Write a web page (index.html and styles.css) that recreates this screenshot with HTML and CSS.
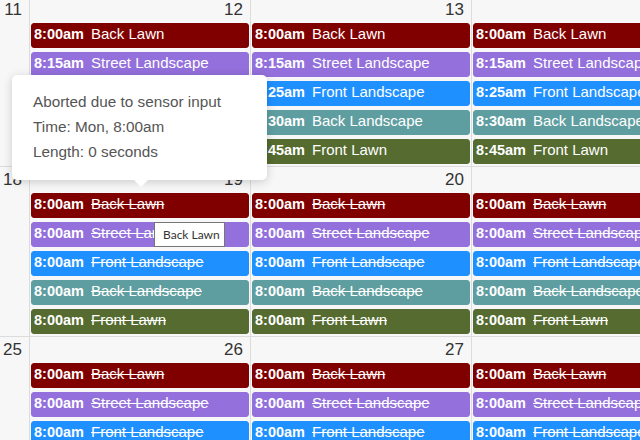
FILE: index.html
```html
<!DOCTYPE html>
<html>
<head>
<meta charset="utf-8">
<link rel="stylesheet" href="styles.css">
</head>
<body>
<div class="cal">
  <div class="week">
    <div class="day"><div class="num">11</div></div>
    <div class="day"><div class="num">12</div>
      <div class="ev c1"><b>8:00am</b><span>Back Lawn</span></div>
      <div class="ev c2"><b>8:15am</b><span>Street Landscape</span></div>
      <div class="ev c3"><b>8:25am</b><span>Front Landscape</span></div>
      <div class="ev c4"><b>8:30am</b><span>Back Landscape</span></div>
      <div class="ev c5"><b>8:45am</b><span>Front Lawn</span></div>
    </div>
    <div class="day"><div class="num">13</div>
      <div class="ev c1"><b>8:00am</b><span>Back Lawn</span></div>
      <div class="ev c2"><b>8:15am</b><span>Street Landscape</span></div>
      <div class="ev c3"><b>8:25am</b><span>Front Landscape</span></div>
      <div class="ev c4"><b>8:30am</b><span>Back Landscape</span></div>
      <div class="ev c5"><b>8:45am</b><span>Front Lawn</span></div>
    </div>
    <div class="day"><div class="num">14</div>
      <div class="ev c1"><b>8:00am</b><span>Back Lawn</span></div>
      <div class="ev c2"><b>8:15am</b><span>Street Landscape</span></div>
      <div class="ev c3"><b>8:25am</b><span>Front Landscape</span></div>
      <div class="ev c4"><b>8:30am</b><span>Back Landscape</span></div>
      <div class="ev c5"><b>8:45am</b><span>Front Lawn</span></div>
    </div>
  </div>
  <div class="week">
    <div class="day"><div class="num">18</div></div>
    <div class="day"><div class="num">19</div>
      <div class="ev c1 done"><b>8:00am</b><span>Back Lawn</span></div>
      <div class="ev c2 done"><b>8:00am</b><span>Street Landscape</span></div>
      <div class="ev c3 done"><b>8:00am</b><span>Front Landscape</span></div>
      <div class="ev c4 done"><b>8:00am</b><span>Back Landscape</span></div>
      <div class="ev c5 done"><b>8:00am</b><span>Front Lawn</span></div>
    </div>
    <div class="day"><div class="num">20</div>
      <div class="ev c1 done"><b>8:00am</b><span>Back Lawn</span></div>
      <div class="ev c2 done"><b>8:00am</b><span>Street Landscape</span></div>
      <div class="ev c3 done"><b>8:00am</b><span>Front Landscape</span></div>
      <div class="ev c4 done"><b>8:00am</b><span>Back Landscape</span></div>
      <div class="ev c5 done"><b>8:00am</b><span>Front Lawn</span></div>
    </div>
    <div class="day"><div class="num">21</div>
      <div class="ev c1 done"><b>8:00am</b><span>Back Lawn</span></div>
      <div class="ev c2 done"><b>8:00am</b><span>Street Landscape</span></div>
      <div class="ev c3 done"><b>8:00am</b><span>Front Landscape</span></div>
      <div class="ev c4 done"><b>8:00am</b><span>Back Landscape</span></div>
      <div class="ev c5 done"><b>8:00am</b><span>Front Lawn</span></div>
    </div>
  </div>
  <div class="week">
    <div class="day"><div class="num">25</div></div>
    <div class="day"><div class="num">26</div>
      <div class="ev c1 done"><b>8:00am</b><span>Back Lawn</span></div>
      <div class="ev c2 done"><b>8:00am</b><span>Street Landscape</span></div>
      <div class="ev c3 done"><b>8:00am</b><span>Front Landscape</span></div>
    </div>
    <div class="day"><div class="num">27</div>
      <div class="ev c1 done"><b>8:00am</b><span>Back Lawn</span></div>
      <div class="ev c2 done"><b>8:00am</b><span>Street Landscape</span></div>
      <div class="ev c3 done"><b>8:00am</b><span>Front Landscape</span></div>
    </div>
    <div class="day"><div class="num">28</div>
      <div class="ev c1 done"><b>8:00am</b><span>Back Lawn</span></div>
      <div class="ev c2 done"><b>8:00am</b><span>Street Landscape</span></div>
      <div class="ev c3 done"><b>8:00am</b><span>Front Landscape</span></div>
    </div>
  </div>
</div>

<div class="tip">
  <div class="tip-line">Aborted due to sensor input</div>
  <div class="tip-line">Time: Mon, 8:00am</div>
  <div class="tip-line">Length: 0 seconds</div>
  <div class="tip-arrow"></div>
</div>

<div class="title-tip">Back Lawn</div>
</body>
</html>
```

FILE: styles.css
```css
html, body {
  margin: 0;
  padding: 0;
  background: #f7f7f7;
  overflow: hidden;
}
body {
  width: 640px;
  height: 440px;
  position: relative;
  font-family: "Liberation Sans", Arial, sans-serif;
}
.cal {
  margin-top: -4px;
  width: 800px;
}
.week {
  display: grid;
  grid-template-columns: 30px 221px 221px 221px;
  height: 170px;
  border-top: 1px solid #dcdcdc;
  box-sizing: border-box;
}
.day {
  border-right: 1px solid #dcdcdc;
  box-sizing: border-box;
  padding: 0 1px 0 1px;
}
.num {
  height: 26px;
  box-sizing: border-box;
  padding: 3px 6px 0 0;
  text-align: right;
  font-size: 17px;
  line-height: 20px;
  color: #333;
}
.ev {
  height: 25px;
  box-sizing: border-box;
  margin-bottom: 4px;
  border-radius: 3px;
  padding: 0 2px;
  color: #fff;
  font-size: 15px;
  line-height: 20px;
  white-space: nowrap;
  overflow: hidden;
  border: 1px solid transparent;
}
.ev b {
  font-weight: bold;
  font-size: 14.5px;
  margin-right: 7px;
}
.done span {
  text-decoration: line-through;
}
.c1 { background: #800000; border-color: #800000; }
.c2 { background: #9370db; border-color: #9370db; }
.c3 { background: #1e90ff; border-color: #1e90ff; }
.c4 { background: #5f9ea0; border-color: #5f9ea0; }
.c5 { background: #556b2f; border-color: #556b2f; }

.tip {
  position: absolute;
  left: 12px;
  top: 75px;
  width: 255px;
  height: 105px;
  box-sizing: border-box;
  padding: 14px 10px 0 21px;
  background: #fff;
  border-radius: 5px;
  box-shadow: 0 2px 10px rgba(0, 0, 0, 0.18);
  color: #555;
  font-size: 15.3px;
  line-height: 25px;
}
.tip-arrow {
  position: absolute;
  left: 124px;
  top: 100px;
  width: 10px;
  height: 10px;
  background: #fff;
  transform: rotate(45deg);
}
.title-tip {
  position: absolute;
  left: 154px;
  top: 222px;
  width: 71px;
  height: 25px;
  box-sizing: border-box;
  border: 1px solid #767676;
  background: #fff;
  color: #333;
  font-family: Lato, "Open Sans", sans-serif;
  font-size: 12px;
  line-height: 23px;
  padding-left: 8px;
}
```
